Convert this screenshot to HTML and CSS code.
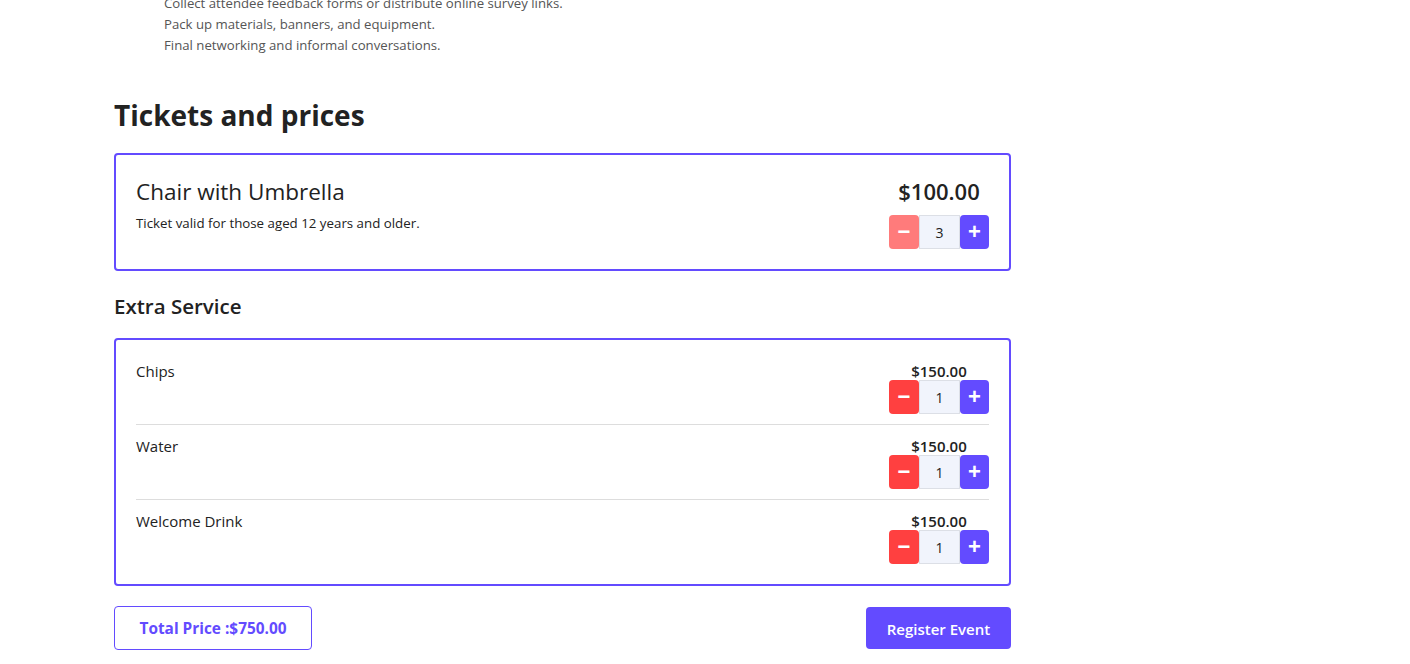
FILE: index.html
```html
<!DOCTYPE html>
<html lang="en">
<head>
    <meta charset="UTF-8">
    <meta name="viewport" content="width=device-width, initial-scale=1.0">
    <title>Tickets and prices</title>
    <link rel="stylesheet" href="styles.css">
</head>
<body>
    <div class="page">
        <ul class="agenda">
            <li>Collect attendee feedback forms or distribute online survey links.</li>
            <li>Pack up materials, banners, and equipment.</li>
            <li>Final networking and informal conversations.</li>
        </ul>

        <h2 class="section-title">Tickets and prices</h2>

        <div class="card ticket">
            <div class="ticket-info">
                <h3 class="ticket-name">Chair with Umbrella</h3>
                <p class="ticket-note">Ticket valid for those aged 12 years and older.</p>
            </div>
            <div class="buy">
                <div class="ticket-price">$100.00</div>
                <div class="qty">
                    <button class="qty-btn minus light" type="button">&minus;</button>
                    <input class="qty-input" type="text" value="3">
                    <button class="qty-btn plus" type="button">+</button>
                </div>
            </div>
        </div>

        <h3 class="sub-title">Extra Service</h3>

        <div class="card extras">
            <div class="extra-row">
                <div class="extra-name">Chips</div>
                <div class="buy">
                    <div class="extra-price">$150.00</div>
                    <div class="qty">
                        <button class="qty-btn minus" type="button">&minus;</button>
                        <input class="qty-input" type="text" value="1">
                        <button class="qty-btn plus" type="button">+</button>
                    </div>
                </div>
            </div>
            <div class="extra-row">
                <div class="extra-name">Water</div>
                <div class="buy">
                    <div class="extra-price">$150.00</div>
                    <div class="qty">
                        <button class="qty-btn minus" type="button">&minus;</button>
                        <input class="qty-input" type="text" value="1">
                        <button class="qty-btn plus" type="button">+</button>
                    </div>
                </div>
            </div>
            <div class="extra-row">
                <div class="extra-name">Welcome Drink</div>
                <div class="buy">
                    <div class="extra-price">$150.00</div>
                    <div class="qty">
                        <button class="qty-btn minus" type="button">&minus;</button>
                        <input class="qty-input" type="text" value="1">
                        <button class="qty-btn plus" type="button">+</button>
                    </div>
                </div>
            </div>
        </div>

        <div class="footer-bar">
            <div class="total">Total Price :$750.00</div>
            <button class="register" type="button">Register Event</button>
        </div>
    </div>
</body>
</html>
```

FILE: styles.css
```css
body {
    font-family: "Open Sans", "Noto Sans", sans-serif;
    background-color: #fff;
    color: #222;
    margin: 0;
}
.page {
    width: 897px;
    margin-left: 114px;
    margin-top: -7px;
}
.agenda {
    list-style: none;
    margin: 0;
    padding-left: 50px;
    font-size: 13.2px;
    line-height: 21px;
    color: #555;
}
.section-title {
    font-size: 28px;
    font-weight: 700;
    margin: 39px 0 18px;
    line-height: 40px;
    color: #222;
}
.card {
    border: 2px solid #634bff;
    border-radius: 4px;
    background-color: #fff;
}
.ticket {
    display: flex;
    justify-content: space-between;
    padding: 20px;
    box-sizing: border-box;
    height: 118px;
}
.ticket-name {
    font-size: 22.5px;
    font-weight: 400;
    margin: 1px 0 6px;
    line-height: 32px;
}
.ticket-note {
    font-size: 13.3px;
    margin: 0;
}
.buy {
    display: flex;
    flex-direction: column;
    align-items: center;
}
.ticket-price {
    font-size: 22px;
    font-weight: 600;
    line-height: 32px;
    margin-bottom: 8px;
}
.qty {
    display: flex;
    height: 34px;
}
.qty-btn {
    width: 30px;
    height: 34px;
    border: none;
    border-radius: 4px;
    color: #fff;
    font-size: 22px;
    font-weight: 700;
    line-height: 1;
    padding: 0;
    cursor: pointer;
    font-family: "Liberation Sans", sans-serif;
}
.minus {
    background-color: #ff4040;
}
.minus.light {
    background-color: #ff7b7b;
}
.plus {
    width: 29px;
    background-color: #634bff;
}
.qty-input {
    width: 41px;
    height: 34px;
    box-sizing: border-box;
    border: 1px solid #dcdfe6;
    background-color: #f1f4fc;
    text-align: center;
    font-size: 14px;
    font-family: inherit;
    color: #222;
    padding: 0;
}
.sub-title {
    font-size: 20.5px;
    font-weight: 600;
    margin: 19px 0 16px;
    line-height: 32px;
}
.extras {
    padding: 10px 20px;
}
.extra-row {
    display: flex;
    justify-content: space-between;
    padding: 12px 0 10px;
    border-bottom: 1px solid #ddd;
}
.extra-row:last-child {
    border-bottom: none;
}
.extra-name {
    font-size: 15px;
    line-height: 18px;
}
.extra-price {
    font-size: 15px;
    font-weight: 600;
    line-height: 18px;
}
.footer-bar {
    display: flex;
    justify-content: space-between;
    align-items: center;
    margin-top: 20px;
}
.total {
    border: 1px solid #634bff;
    border-radius: 4px;
    color: #634bff;
    font-weight: 700;
    font-size: 15.4px;
    width: 198px;
    text-align: center;
    height: 44px;
    padding-top: 2px;
    line-height: 40px;
    box-sizing: border-box;
}
.register {
    background-color: #634bff;
    color: #fff;
    border: none;
    border-radius: 4px;
    font-family: inherit;
    font-weight: 600;
    font-size: 15px;
    height: 42px;
    width: 145px;
    padding: 1px 0 0;
    cursor: pointer;
}
```
